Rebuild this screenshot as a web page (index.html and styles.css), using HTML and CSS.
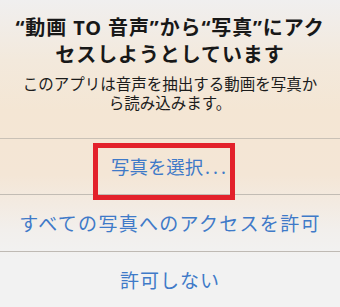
FILE: index.html
```html
<!DOCTYPE html>
<html lang="ja">
<head>
<meta charset="utf-8">
<link rel="stylesheet" href="styles.css">
</head>
<body>
<div class="alert">
  <div class="header">
    <div class="title">“動画 TO 音声”から“写真”にアクセスしようとしています</div>
    <div class="message">このアプリは音声を抽出する動画を写真から読み込みます。</div>
  </div>
  <div class="btn btn-select">写真を選択<span class="dots">...</span></div>
  <div class="btn btn-all">すべての写真へのアクセスを許可</div>
  <div class="btn btn-deny">許可しない</div>
  <div class="highlight"></div>
</div>
</body>
</html>
```

FILE: styles.css
```css
html, body {
  margin: 0;
  padding: 0;
}
body {
  width: 340px;
  height: 307px;
  overflow: hidden;
  font-family: "Noto Sans CJK JP", "Noto Sans", sans-serif;
}
.alert {
  position: relative;
  width: 340px;
  height: 307px;
  background: linear-gradient(to bottom, #f0efef 0px, #f3e9dc 60px, #f4e6d4 110px, #f4e6d6 175px, #f2efec 230px, #f2f2f2 260px, #f2f2f2 307px);
  display: flex;
  flex-direction: column;
}
.header {
  height: 140px;
  box-sizing: border-box;
  padding: 15px 10px 0;
  text-align: center;
  border-bottom: 1px solid #c9c1b6;
}
.title {
  font-family: "Noto Sans", "Noto Sans CJK JP", sans-serif;
  font-size: 20px;
  font-weight: bold;
  line-height: 26.5px;
  color: #181818;
  letter-spacing: 0.9px;
}
.message {
  margin-top: 6px;
  font-size: 15.5px;
  line-height: 19px;
  color: #1c1c1c;
  padding: 0 6px;
}
.btn {
  height: 56px;
  display: flex;
  align-items: center;
  justify-content: center;
  color: #3f7ac8;
  font-size: 19px;
  letter-spacing: 1px;
  border-bottom: 1px solid #bfbab4;
}
.btn-select {
  font-size: 18.4px;
  letter-spacing: 0;
  border-bottom-color: #c2bcb4;
}
.dots {
  font-family: "Noto Sans", sans-serif;
  letter-spacing: 3px;
  margin-left: 2px;
}
.btn-all {
  letter-spacing: 1.3px;
}
.btn-deny {
  border-bottom: none;
}
.highlight {
  position: absolute;
  left: 93px;
  top: 143px;
  width: 142px;
  height: 57px;
  box-sizing: border-box;
  border: 5px solid #e3212b;
}
```
